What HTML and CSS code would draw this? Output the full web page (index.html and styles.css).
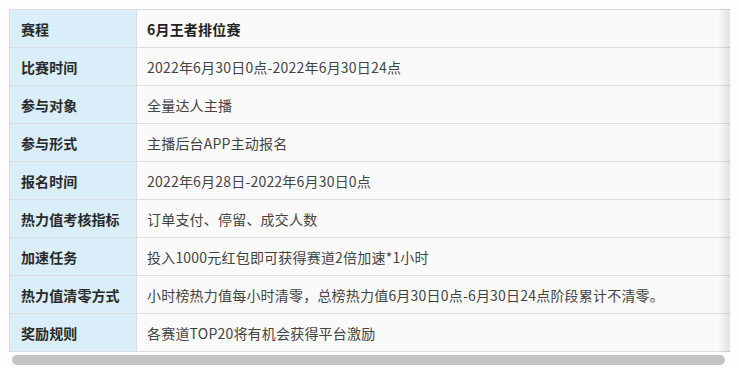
FILE: index.html
```html
<!DOCTYPE html>
<html lang="zh">
<head>
<meta charset="utf-8">
<link rel="stylesheet" href="styles.css">
</head>
<body>
<div class="wrap">
  <div class="scroller">
    <table class="info">
      <tr><th>赛程</th><td class="strong">6月王者排位赛</td></tr>
      <tr><th>比赛时间</th><td>2022年6月30日0点-2022年6月30日24点</td></tr>
      <tr><th>参与对象</th><td>全量达人主播</td></tr>
      <tr><th>参与形式</th><td>主播后台APP主动报名</td></tr>
      <tr><th>报名时间</th><td>2022年6月28日-2022年6月30日0点</td></tr>
      <tr><th>热力值考核指标</th><td>订单支付、停留、成交人数</td></tr>
      <tr><th>加速任务</th><td>投入1000元红包即可获得赛道2倍加速*1小时</td></tr>
      <tr><th>热力值清零方式</th><td>小时榜热力值每小时清零，总榜热力值6月30日0点-6月30日24点阶段累计不清零。</td></tr>
      <tr><th>奖励规则</th><td>各赛道TOP20将有机会获得平台激励</td></tr>
    </table>
    <div class="shadow"></div>
  </div>
  <div class="scrollbar"><div class="thumb"></div></div>
</div>
</body>
</html>
```
FILE: styles.css
```css
html, body {
  margin: 0;
  padding: 0;
  background: #fdfdfd;
}
body {
  font-family: "Microsoft YaHei", "Noto Sans CJK SC", "Noto Sans", sans-serif;
  font-size: 14px;
  color: #333;
}
.wrap {
  padding: 9px 0 0 9px;
  width: 730px;
}
.scroller {
  position: relative;
  width: 721px;
  overflow: hidden;
}
.info {
  border-collapse: collapse;
  width: 760px;
  table-layout: fixed;
}
.info th, .info td {
  height: 37px;
  padding: 0 10px;
  border: 1px solid #dcdcdc;
  text-align: left;
  white-space: nowrap;
  line-height: 20px;
  box-sizing: border-box;
}
.info tr {
  height: 38px;
}
.info th {
  width: 127px;
  background: #d9eef9;
  font-weight: bold;
  color: #2a2a2a;
  padding-left: 11px;
  letter-spacing: 0.1px;
}
.info td {
  background: #fafafa;
  color: #444;
  letter-spacing: 0.2px;
}
.info td.strong {
  font-weight: bold;
  color: #222;
}
.shadow {
  position: absolute;
  top: 0;
  right: 0;
  bottom: 0;
  width: 12px;
  background: linear-gradient(to right, rgba(0,0,0,0), rgba(0,0,0,0.10));
}
.scrollbar {
  padding: 3px 0 0 3px;
  height: 13px;
}
.thumb {
  width: 713px;
  height: 10px;
  border-radius: 5px;
  background: #c4c4c4;
}
```
